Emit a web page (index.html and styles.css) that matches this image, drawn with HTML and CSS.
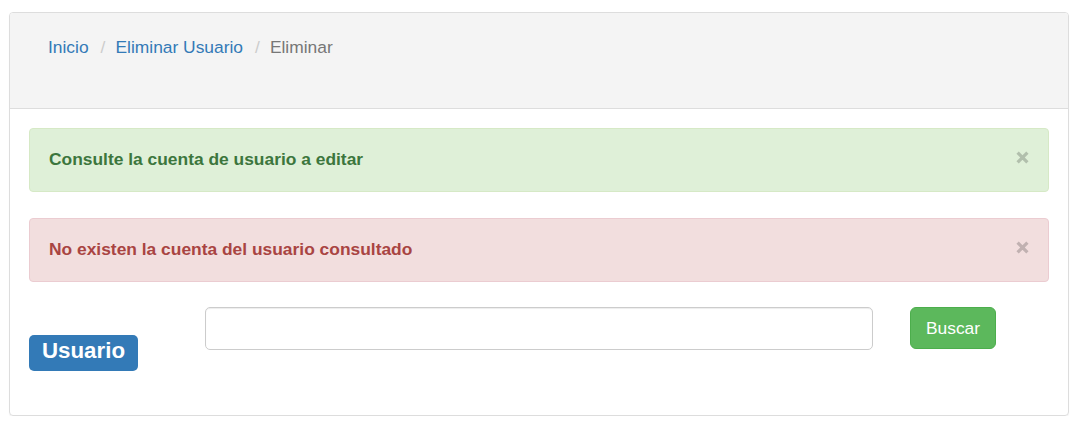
FILE: index.html
```html
<!DOCTYPE html>
<html lang="es">
<head>
<meta charset="utf-8">
<title>Eliminar Usuario</title>
<link rel="stylesheet" href="styles.css">
</head>
<body>
<div class="page">
  <div class="panel">
    <div class="panel-heading">
      <ol class="breadcrumb">
        <li><a href="#">Inicio</a></li>
        <li class="sep">/</li>
        <li><a href="#">Eliminar Usuario</a></li>
        <li class="sep">/</li>
        <li class="active">Eliminar</li>
      </ol>
    </div>
    <div class="panel-body">
      <div class="alert alert-success">
        <span class="alert-text">Consulte la cuenta de usuario a editar</span>
        <button class="close" type="button" aria-label="Cerrar"><svg width="13" height="13" viewBox="0 0 13 13"><path d="M1.6 1.6L11.4 11.4M11.4 1.6L1.6 11.4"/></svg></button>
      </div>
      <div class="alert alert-danger">
        <span class="alert-text">No existen la cuenta del usuario consultado</span>
        <button class="close" type="button" aria-label="Cerrar"><svg width="13" height="13" viewBox="0 0 13 13"><path d="M1.6 1.6L11.4 11.4M11.4 1.6L1.6 11.4"/></svg></button>
      </div>
      <form class="search-row">
        <div class="label-col"><span class="label-primary">Usuario</span></div>
        <input class="form-control" type="text">
        <button class="btn-success" type="button">Buscar</button>
      </form>
    </div>
  </div>
</div>
</body>
</html>
```

FILE: styles.css
```css
* { box-sizing: border-box; }

html, body {
  margin: 0;
  padding: 0;
  background: #fff;
  font-family: "Liberation Sans", Arial, sans-serif;
  color: #333;
}

.page {
  padding: 12px 10px 0 9px;
}

.panel {
  width: 1060px;
  border: 1px solid #ddd;
  border-radius: 4px;
  overflow: hidden;
  box-shadow: 0 1px 1px rgba(0,0,0,.05);
}

.panel-heading {
  background: #f4f4f4;
  border-bottom: 1px solid #ddd;
  height: 96px;
  padding: 22px 38px 0;
}

.breadcrumb {
  list-style: none;
  margin: 0;
  padding: 0;
  display: flex;
  font-size: 17.4px;
  line-height: 24px;
}

.breadcrumb a {
  color: #337ab7;
  text-decoration: none;
}

.breadcrumb .sep {
  color: #ccc;
  margin: 0 10px 0 12px;
}

.breadcrumb .active {
  color: #777;
}

.panel-body {
  padding: 19px 19px 44px;
}

.alert {
  display: flex;
  justify-content: space-between;
  align-items: flex-start;
  height: 64px;
  padding: 18px 19px 0 19px;
  border: 1px solid transparent;
  border-radius: 4px;
  font-size: 17.4px;
  font-weight: bold;
  line-height: 24px;
}

.alert-success {
  background: #dff0d8;
  border-color: #d6e9c6;
  color: #3c763d;
  margin-bottom: 26px;
}

.alert-danger {
  background: #f2dede;
  border-color: #ebccd1;
  color: #a94442;
  margin-bottom: 25px;
}

.close {
  display: block;
  width: 13px;
  height: 13px;
  margin-top: 4px;
  background: none;
  border: 0;
  padding: 0;
  opacity: .2;
  cursor: pointer;
}

.close svg {
  display: block;
  fill: none;
  stroke: #000;
  stroke-width: 3.2;
}

.search-row {
  display: flex;
  align-items: flex-start;
  height: 64px;
  margin: 0;
}

.label-col {
  width: 176px;
  flex: none;
  padding-top: 28px;
}

.label-primary {
  display: inline-block;
  background: #337ab7;
  color: #fff;
  font-size: 22.3px;
  font-weight: bold;
  line-height: 22px;
  padding: 5px 13px 9px;
  border-radius: 5px;
}

.form-control {
  width: 668px;
  height: 43px;
  flex: none;
  border: 1px solid #ccc;
  border-radius: 5px;
  box-shadow: inset 0 1px 1px rgba(0,0,0,.075);
  font-family: "Liberation Sans", Arial, sans-serif;
  font-size: 17px;
  padding: 0 16px;
  margin: 0 37px 0 0;
  background: #fff;
}

.btn-success {
  height: 42px;
  width: 86px;
  flex: none;
  padding: 0;
  background: #5cb85c;
  border: 1px solid #4cae4c;
  border-radius: 6px;
  color: #fff;
  font-family: "Liberation Sans", Arial, sans-serif;
  font-size: 17.4px;
  line-height: 40px;
  cursor: pointer;
}
```
